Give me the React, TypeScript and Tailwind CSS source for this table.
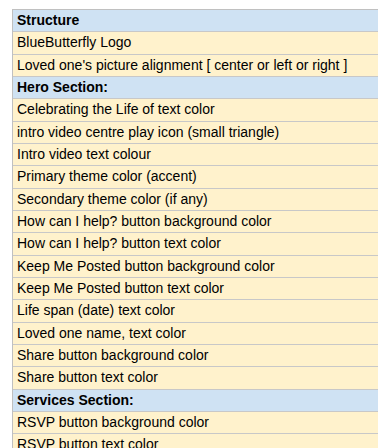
import React from "react";

const rows: { t: string; h?: boolean }[] = [
  { t: "Structure", h: true },
  { t: "BlueButterfly Logo" },
  { t: "Loved one's picture alignment [ center or left or right ]" },
  { t: "Hero Section:", h: true },
  { t: "Celebrating the Life of text color" },
  { t: "intro video centre play icon (small triangle)" },
  { t: "Intro video text colour" },
  { t: "Primary theme color (accent)" },
  { t: "Secondary theme color (if any)" },
  { t: "How can I help? button background color" },
  { t: "How can I help? button text color" },
  { t: "Keep Me Posted button background color" },
  { t: "Keep Me Posted button text color" },
  { t: "Life span (date) text color" },
  { t: "Loved one name, text color" },
  { t: "Share button background color" },
  { t: "Share button text color" },
  { t: "Services Section:", h: true },
  { t: "RSVP button background color" },
  { t: "RSVP button text color" },
];

export default function App() {
  return (
    <div className="w-[378px] h-[448px] overflow-hidden bg-white pt-[9px] pl-[12px]" style={{ fontFamily: '"Liberation Sans", Arial, sans-serif' }}>
      <div className="w-[380px] border-t border-l border-[#c0c0c0]">
        {rows.map((r, i) => (
          <div
            key={i}
            className={`h-[22.33px] flex items-center pl-[4px] border-b border-[#c8c8c8] text-[14px] text-black whitespace-nowrap ${r.h ? "bg-[#cfe2f3] font-bold" : "bg-[#fff2cc]"}`}
          >
            {r.t}
          </div>
        ))}
      </div>
    </div>
  );
}
